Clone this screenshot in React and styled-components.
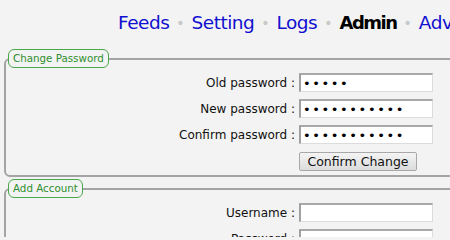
import React from "react";
import styled, { createGlobalStyle } from "styled-components";

const Global = createGlobalStyle`
  html, body { margin: 0; padding: 0; background: #f3f3f3; }
  body { font-family: "DejaVu Sans", "Liberation Sans", sans-serif; overflow: hidden; }
`;

const Page = styled.div`
  width: 450px;
  height: 237px;
  overflow: hidden;
  background: #f3f3f3;
`;

const Nav = styled.nav`
  display: flex;
  align-items: center;
  gap: 7px;
  white-space: nowrap;
  padding: 5px 0 0 118px;
  height: 40px;
  box-sizing: border-box;
  font-size: 18.5px;
`;

const NavLink = styled.a`
  color: ${(p) => (p.$active ? "#000" : "#1010d0")};
  font-weight: ${(p) => (p.$active ? "bold" : "normal")};
  font-size: ${(p) => (p.$active ? "18px" : "18.5px")};
  letter-spacing: ${(p) => (p.$active ? "-1.5px" : "-0.5px")};
  text-decoration: none;
`;

const Dot = styled.span`
  color: #c8c8c8;
  font-size: 14px;
`;

const Box = styled.fieldset`
  margin: ${(p) => p.$top}px 0 0 4px;
  width: 520px;
  border: 2px solid #a4a4a4;
  border-radius: 6px;
  padding: 5px 0 4px 0;
`;

const Legend = styled.legend`
  margin-left: 2px;
  padding: 1px 4px 2px;
  border: 1px solid #4aa84a;
  border-radius: 6px;
  color: #2e8f2e;
  font-size: 10.3px;
  line-height: 14px;
`;

const Form = styled.div`
  display: grid;
  grid-template-columns: 289px 134px;
  column-gap: 4px;
  row-gap: 7px;
  align-items: center;
`;

const Label = styled.label`
  text-align: right;
  font-size: 12px;
  color: #111;
`;

const Input = styled.input`
  box-sizing: border-box;
  width: 134px;
  height: 19px;
  margin: 0;
  padding: 0 2px;
  background: #fff;
  border: 1px solid #dcdcdc;
  border-top: 2px solid #a8a8a8;
  border-left: 2px solid #a0a0a0;
  font-family: "DejaVu Sans", sans-serif;
  font-size: 13px;
  letter-spacing: ${(p) => (p.type === "password" ? "1.6px" : "0")};
  outline: none;
`;

const Button = styled.button`
  grid-column: 2;
  justify-self: start;
  box-sizing: border-box;
  width: 118px;
  height: 19px;
  margin-top: 1px;
  padding: 0;
  font-family: inherit;
  font-size: 12.5px;
  color: #111;
  background: linear-gradient(#f4f4f4, #dcdcdc);
  border: 1px solid #a8a8a8;
  border-radius: 2px;
`;

export default function App() {
  return (
    <Page>
      <Global />
      <Nav>
        <NavLink href="#">Feeds</NavLink>
        <Dot>•</Dot>
        <NavLink href="#">Setting</NavLink>
        <Dot>•</Dot>
        <NavLink href="#">Logs</NavLink>
        <Dot>•</Dot>
        <NavLink $active href="#">Admin</NavLink>
        <Dot>•</Dot>
        <NavLink href="#">Advanced</NavLink>
      </Nav>
      <Box $top={9}>
        <Legend>Change Password</Legend>
        <Form>
          <Label>Old password :</Label>
          <Input type="password" defaultValue="12345" />
          <Label>New password :</Label>
          <Input type="password" defaultValue="12345678901" />
          <Label>Confirm password :</Label>
          <Input type="password" defaultValue="12345678901" />
          <Button>Confirm Change</Button>
        </Form>
      </Box>
      <Box $top={2}>
        <Legend>Add Account</Legend>
        <Form>
          <Label>Username :</Label>
          <Input type="text" />
          <Label>Password :</Label>
          <Input type="password" />
        </Form>
      </Box>
    </Page>
  );
}
